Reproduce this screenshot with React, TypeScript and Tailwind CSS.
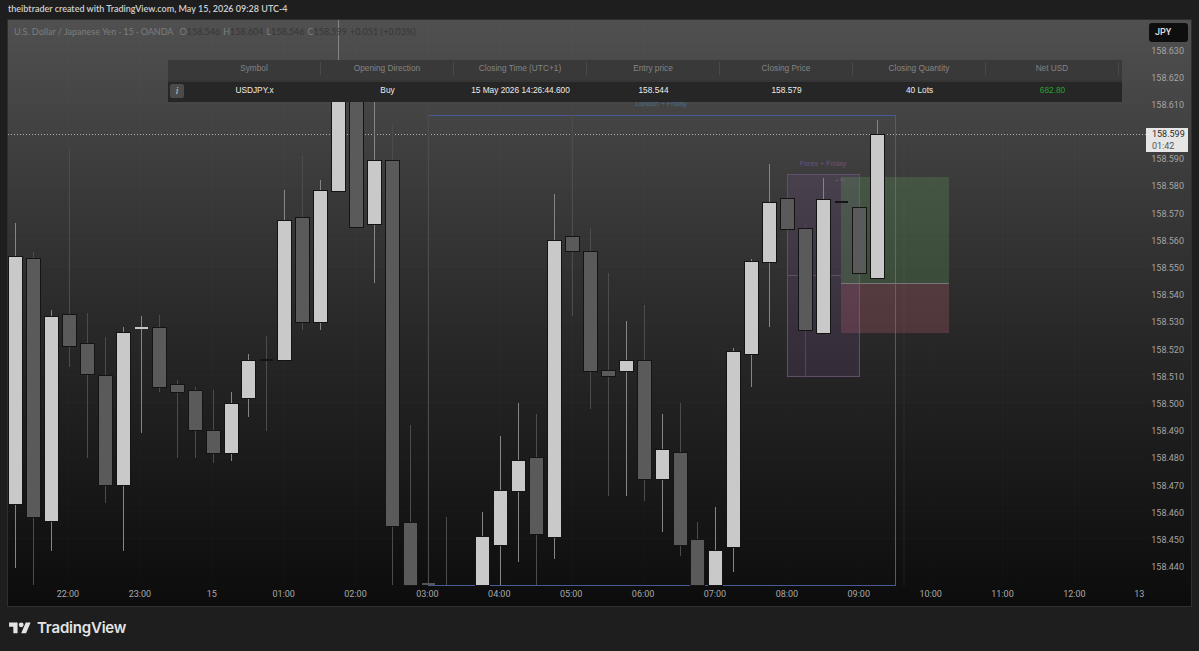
const candles = [
  // up, wick top, wick bottom, body top, body bottom
  [1, 223, 568, 257, 504], [0, 252, 585, 259, 517], [1, 310, 551, 317, 521], [0, 150, 367, 315, 346],
  [0, 313, 458, 344, 374], [0, 337, 503, 376, 485], [1, 327, 551, 333, 485], [1, 316, 433, 328, 330],
  [0, 315, 392, 328, 387], [0, 380, 458, 385, 392], [0, 387, 458, 391, 430], [0, 390, 463, 431, 453],
  [1, 392, 461, 404, 453], [1, 354, 417, 361, 398], [0, 336, 431, 360, 360], [1, 190, 360, 221, 360],
  [0, 155, 330, 218, 322], [1, 180, 330, 191, 322], [1, 20, 191, 70, 191], [0, 20, 227, 70, 227],
  [1, 62, 283, 161, 224], [0, 125, 585, 161, 526], [0, 425, 585, 523, 585], [0, 115, 584, 584, 584],
  [0, 517, 585, 0, 0], null, [1, 512, 585, 537, 585], [1, 436, 585, 491, 545],
  [1, 403, 562, 461, 491], [0, 414, 585, 458, 534], [1, 194, 559, 241, 537], [0, 115, 316, 237, 251],
  [0, 228, 409, 252, 371], [0, 273, 496, 371, 376], [1, 321, 496, 361, 371], [0, 305, 501, 361, 479],
  [1, 414, 532, 450, 479], [0, 403, 556, 453, 545], [0, 522, 585, 540, 585], [1, 507, 585, 551, 585],
  [1, 348, 572, 352, 547], [1, 259, 387, 262, 354], [1, 164, 327, 203, 262], [0, 199, 229, 199, 229],
  [0, 225, 377, 229, 330], [1, 178, 333, 200, 333], [0, 202, 202, 202, 202], [0, 208, 273, 208, 273],
  [1, 120, 278, 135, 278],
];

const prices = ['158.630', '158.620', '158.610', '', '158.590', '158.580', '158.570', '158.560', '158.550', '158.540', '158.530', '158.520', '158.510', '158.500', '158.490', '158.480', '158.470', '158.460', '158.450', '158.440'];
const times = ['22:00', '23:00', '15', '01:00', '02:00', '03:00', '04:00', '05:00', '06:00', '07:00', '08:00', '09:00', '10:00', '11:00', '12:00'];
const headers = ['Symbol', 'Opening Direction', 'Closing Time (UTC+1)', 'Entry price', 'Closing Price', 'Closing Quantity', 'Net USD'];
const values = ['USDJPY.x', 'Buy', '15 May 2026 14:26:44.600', '158.544', '158.579', '40 Lots', '682.80'];

function ChartDrawing() {
  return (
    <svg className="absolute inset-0" width="1183" height="585" viewBox="8 20 1183 585">
      {/* faint grid */}
      {prices.map((_, i) => (
        <line key={i} x1="8" x2="1146" y1={49 + i * 27.2} y2={49 + i * 27.2} stroke="#ffffff" strokeOpacity="0.02" />
      ))}
      {times.map((_, i) => (
        <line key={i} x1={68 + i * 71.9} x2={68 + i * 71.9} y1="20" y2="586" stroke="#ffffff" strokeOpacity="0.02" />
      ))}

      {/* session boxes and position tool */}
      <rect x="428.5" y="115.5" width="467" height="470" fill="#ffffff" fillOpacity="0.008" stroke="#465a98" />
      <line x1="904" x2="904" y1="20" y2="586" stroke="#6a4a3a" strokeOpacity="0.25" />
      <rect x="787.5" y="174.5" width="72" height="202" fill="#8a5aa8" fillOpacity="0.15" stroke="#5f4f68" />
      <line x1="787" x2="841" y1="275.5" y2="275.5" stroke="#5f4f68" />
      <rect x="841" y="177" width="108" height="106" fill="#5f9a5f" fillOpacity="0.28" />
      <rect x="841" y="284" width="108" height="49" fill="#a85a6a" fillOpacity="0.3" />
      <line x1="841" x2="949" y1="283.5" y2="283.5" stroke="#777777" />
      <line x1="8" x2="1146" y1="134.5" y2="134.5" stroke="#b4b4b4" strokeDasharray="1 2" />

      {candles.map((c, i) => {
        if (!c) return null;
        const [up, wt, wb, bt, bb] = c;
        const x = Math.round(15 + i * 17.96);
        return (
          <g key={i}>
            <line x1={x + 0.5} x2={x + 0.5} y1={wt} y2={wb} stroke={up ? '#858585' : '#4c4c4c'} />
            {bt === 0 ? null : bb - bt < 3 ? (
              <rect x={x - 6} y={bt - 1} width="13" height="2" fill={up ? '#c8c8c8' : i === 23 ? '#555555' : '#141414'} />
            ) : (
              <rect
                x={x - 6.5}
                y={bt - 0.5}
                width="14"
                height={bb - bt + 1}
                fill={up ? '#c9c9c9' : '#5a5a5a'}
                stroke="#141414"
              />
            )}
          </g>
        );
      })}

      <text x="823" y="166" textAnchor="middle" fontSize="7.2" fill="#6f5285" fontFamily="Liberation Sans, sans-serif">
        Forex + Friday
      </text>
      <text x="661" y="106" textAnchor="middle" fontSize="7.1" fill="#4a6a9a" fontFamily="Liberation Sans, sans-serif">
        London + Friday
      </text>
      <text x="840" y="182" textAnchor="middle" fontSize="5" fill="#6a6a6a" fontFamily="Liberation Sans, sans-serif">
        + %
      </text>
    </svg>
  );
}

function TradeTable() {
  return (
    <div className="absolute left-[160px] top-[40px] w-[954px] font-['Liberation_Sans',sans-serif] text-[8.3px]">
      <div className="h-[20px] bg-[#393939] flex pl-[20px] pb-[3px] items-center">
        {headers.map((h) => (
          <div key={h} className="w-[133px] text-center text-[#848484] border-r border-[#4a4a4a]">
            {h}
          </div>
        ))}
      </div>
      <div className="h-[22px] bg-[#262626] border-t-2 border-[#353535] flex items-center pl-[2px] pb-[3px]">
        <div className="w-[14px] h-[14px] mr-[4px] bg-[#4b4b4b] rounded-[2px] text-[#c0c0c0] text-[11px] italic flex items-center justify-center font-['Liberation_Serif',serif]">
          i
        </div>
        {values.map((v) => (
          <div key={v} className={`w-[133px] text-center ${v === '682.80' ? 'text-[#25a32f]' : 'text-[#ededed]'}`}>
            {v}
          </div>
        ))}
      </div>
    </div>
  );
}

export default function App() {
  return (
    <div className="w-[1199px] h-[651px] bg-[#1e1e1e] overflow-hidden flex flex-col font-['Lato',sans-serif]">
      <div className="h-[20px] pb-[2px] pl-[8px] flex items-center text-[9px] font-semibold text-[#cfcfcf] whitespace-nowrap">
        theibtrader created with TradingView.com, May 15, 2026 09:28 UTC-4
      </div>

      <div className="relative mx-[8px] h-[586px] bg-gradient-to-b from-[#505050] via-[#2a2a2a] via-50% to-[#0c0c0c] outline outline-1 outline-[#2f2f2f] flex flex-col">
        <ChartDrawing />

        <div className="absolute left-[6px] top-[5px] text-[9px] whitespace-nowrap text-[#7d7d7d] flex gap-[3px]">
          <span>U.S. Dollar / Japanese Yen · 15 · OANDA</span>
          <span className="ml-[3px]">O<span className="text-[#363636]">158.546</span></span>
          <span>H<span className="text-[#363636]">158.604</span></span>
          <span>L<span className="text-[#363636]">158.546</span></span>
          <span>C<span className="text-[#363636]">158.599</span></span>
          <span className="text-[#363636]">+0.051 (+0.03%)</span>
        </div>

        <TradeTable />

        <div className="relative flex-1 flex justify-end font-['Roboto',sans-serif]">
          <div className="w-[45px] pt-[17.7px] pr-[7px] text-[9px] text-[#a4a4a4] text-right">
            {prices.map((p, i) => (
              <div key={i} className="h-[27.2px] flex items-center justify-end">
                {p}
              </div>
            ))}
          </div>
        </div>

        <div className="relative h-[20px] pb-[2px] pl-[24px] flex items-center text-[9px] text-[#a8a8a8] font-['Roboto',sans-serif]">
          {times.map((t) => (
            <div key={t} className="w-[71.9px] text-center">
              {t}
            </div>
          ))}
          <div className="w-[58px] text-center">13</div>
        </div>

        <div className="absolute left-[1141px] top-[3px] w-[39px] h-[19px] bg-[#0e0e0e] rounded-[3px] pl-[6px] flex items-center text-[9px] font-medium text-[#e0e0e0] font-['Roboto',sans-serif]">
          JPY
        </div>
        <div className="absolute left-[1138px] top-[108px] w-[42px] h-[24px] bg-[#e6e6e6] pl-[6px] text-[9px] leading-[12px] text-[#2a2a2a] font-['Roboto',sans-serif]">
          <div>158.599</div>
          <div className="text-[#555555]">01:42</div>
        </div>
      </div>

      <div className="flex-1 pl-[9px] flex items-center gap-[6px] text-[#e4e4e4]">
        <svg width="22" height="17" viewBox="0 0 36 28" fill="currentColor">
          <path d="M14 22H7V11H0V4h14v18zM28 22h-8l7.5-18h8L28 22z" />
          <circle cx="20" cy="8" r="4" />
        </svg>
        <span className="font-['Inter',sans-serif] text-[15px] font-semibold tracking-[-0.2px]">TradingView</span>
      </div>
    </div>
  );
}
